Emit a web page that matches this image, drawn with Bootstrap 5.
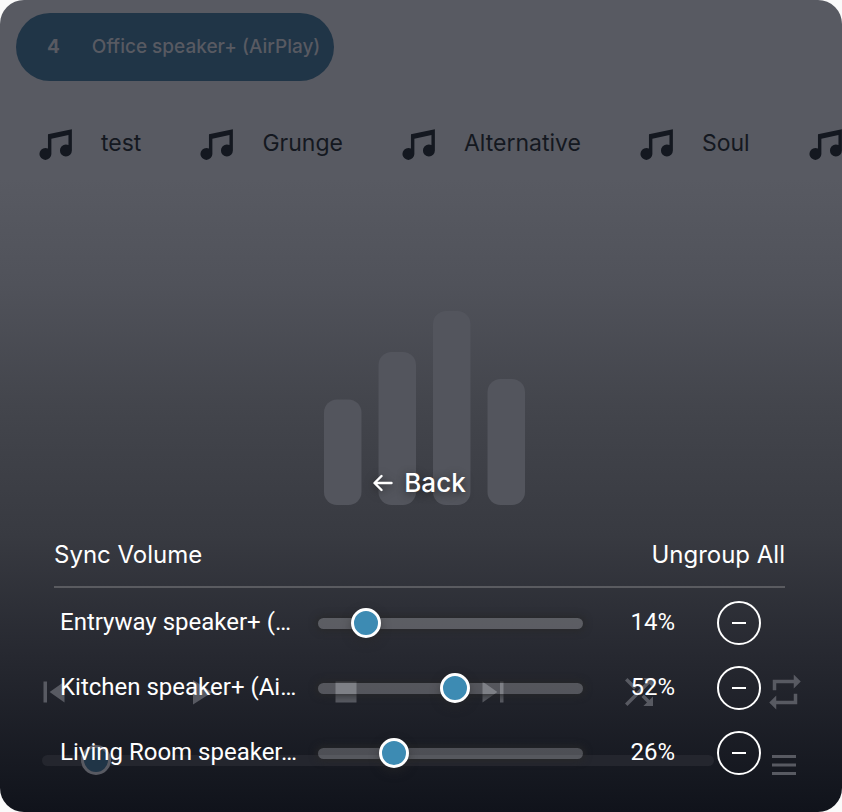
<!DOCTYPE html>
<html lang="en">
<head>
<meta charset="utf-8">
<meta name="viewport" content="width=device-width, initial-scale=1">
<title>Speaker group</title>
<link href="https://cdn.jsdelivr.net/npm/bootstrap@5.3.0/dist/css/bootstrap.min.css" rel="stylesheet">
<style>
  body { background: #fafafa; font-family: Inter, "Liberation Sans", sans-serif; }
  .player {
    min-height: 100vh;
    border-radius: 24px;
    background: linear-gradient(180deg, #585a62 0%, #585a62 22%, #50525a 35%, #43454c 50%, #383a41 66%, #262830 81%, #10131b 100%);
  }
  .dimmed { color: #585a62; padding: 13px 0 37px; }
  .speaker-chip {
    height: 68px; margin-left: 16px; padding: 0 14px 0 31px; gap: 32px;
    font-size: 19px; font-weight: 500;
  }
  .speaker-chip:disabled { opacity: 1; background: #203547; color: #585a62; }
  .media-list { padding: 0 0 0 36px; margin-top: 43px; gap: 56px; }
  .media-btn { gap: 24px; color: #141820; font-size: 23px; line-height: 42px; white-space: nowrap; flex: none; }
  .media-btn svg { width: 41px; height: 41px; }
  .media-btn span { line-height: 32px; padding-bottom: 4px; }
  .art { padding: 0 0 166px 6px; }
  .transport { padding: 0 36px 0 33px; }
  .transport svg { width: 42px; height: 42px; display: block; }
  .timeline { padding: 32px 46px 0 42px; gap: 58px; }
  .timeline svg { width: 24px; height: 20px; display: block; margin-top: 9px; }
  .sheet { color: #fff; padding: 0 57px 37px 54px; }
  .back-btn { font-size: 26px; font-weight: 500; line-height: 32px; gap: 11px; text-shadow: 0 2px 8px rgba(30, 30, 30, .8); }
  .back-btn svg { filter: drop-shadow(0 2px 5px rgba(30, 30, 30, .8)); }
  .sheet-head { margin-top: 40px; padding-bottom: 15px; border-bottom: 2px solid #5a5b60; font-size: 24px; line-height: 32px; }
  .speaker-rows { font-family: Roboto, "Liberation Sans", sans-serif; font-size: 24px; line-height: 32px; padding: 13px 24px 0 6px; gap: 21px; }
  .speaker-row { display: grid; grid-template-columns: 240fr 283fr 92px 86px; align-items: center; }
  .speaker-row > label, .speaker-row > output { padding-bottom: 2px; }
  .speaker-row > .level { margin-left: 18px; }
  .remove-btn { width: 44px; height: 44px; border: 2px solid #fff; }
  .level, .seek { -webkit-appearance: none; appearance: none; background: transparent; height: 30px; margin: 0; min-width: 0; display: block; }
  .level::-webkit-slider-runnable-track { height: 11px; border-radius: 6px; background: rgba(255, 255, 255, .23); box-shadow: 0 0 7px 2px rgba(40, 40, 40, .8); }
  .seek::-webkit-slider-runnable-track { height: 11px; border-radius: 6px; background: #24262e; }
  .level::-webkit-slider-thumb, .seek::-webkit-slider-thumb {
    -webkit-appearance: none; width: 30px; height: 30px; margin-top: -10px; border-radius: 50%;
    border: 3px solid #fff; background: #3d8bb3; box-shadow: 0 4px 10px rgba(40, 40, 40, .5);
  }
  .seek::-webkit-slider-thumb { border-color: #585a62; background: #203547; box-shadow: none; }
</style>
</head>
<body>
<svg class="d-none" aria-hidden="true">
  <symbol id="note" viewBox="0 0 24 24"><path fill="currentColor" d="M21,3V15.5A3.5,3.5 0 0,1 17.5,19A3.5,3.5 0 0,1 14,15.5A3.5,3.5 0 0,1 17.5,12C18.04,12 18.55,12.12 19,12.34V6.47L9,8.6V17.5A3.5,3.5 0 0,1 5.5,21A3.5,3.5 0 0,1 2,17.5A3.5,3.5 0 0,1 5.5,14C6.04,14 6.55,14.12 7,14.34V6L21,3Z"/></symbol>
</svg>
<main class="player position-relative overflow-hidden d-flex flex-column">
  <div class="dimmed d-flex flex-column flex-grow-1">
    <div class="d-flex">
      <button class="speaker-chip btn rounded-pill border-0 d-flex align-items-center" type="button" disabled><strong>4</strong><span>Office speaker+ (AirPlay)</span></button>
    </div>
    <nav class="media-list d-flex overflow-hidden" aria-label="Favorites">
      <button class="media-btn btn p-0 border-0 d-flex align-items-center" type="button"><svg aria-hidden="true"><use href="#note"/></svg><span>test</span></button>
      <button class="media-btn btn p-0 border-0 d-flex align-items-center" type="button"><svg aria-hidden="true"><use href="#note"/></svg><span>Grunge</span></button>
      <button class="media-btn btn p-0 border-0 d-flex align-items-center" type="button"><svg aria-hidden="true"><use href="#note"/></svg><span>Alternative</span></button>
      <button class="media-btn btn p-0 border-0 d-flex align-items-center" type="button"><svg aria-hidden="true"><use href="#note"/></svg><span>Soul</span></button>
      <button class="media-btn btn p-0 border-0 d-flex align-items-center" type="button" aria-label="More"><svg aria-hidden="true"><use href="#note"/></svg></button>
    </nav>
    <div class="art flex-grow-1 d-flex justify-content-center align-items-end">
      <svg width="201" height="194" viewBox="0 0 201 194" fill="#53555d" aria-hidden="true">
        <rect x="0" y="88.500" width="37.500" height="105.500" rx="13"/>
        <rect x="54.500" y="41" width="37.500" height="153" rx="13"/>
        <rect x="109" y="0" width="37.500" height="194" rx="13"/>
        <rect x="163.500" y="68" width="37.500" height="126" rx="13"/>
      </svg>
    </div>
    <div class="transport d-flex justify-content-between">
      <button class="btn p-0 border-0 text-reset" type="button" aria-label="Previous"><svg viewBox="0 0 24 24" fill="currentColor"><path d="M6,18V6H8V18H6M9.500,12L18,6V18L9.500,12Z"/></svg></button>
      <button class="btn p-0 border-0 text-reset" type="button" aria-label="Play"><svg viewBox="0 0 24 24" fill="currentColor"><path d="M8,5.140V19.140L19,12.140L8,5.140Z"/></svg></button>
      <button class="btn p-0 border-0 text-reset" type="button" aria-label="Stop"><svg viewBox="0 0 24 24" fill="currentColor"><path d="M18,18H6V6H18V18Z"/></svg></button>
      <button class="btn p-0 border-0 text-reset" type="button" aria-label="Next"><svg viewBox="0 0 24 24" fill="currentColor"><path d="M16,18H18V6H16M6,18L14.500,12L6,6V18Z"/></svg></button>
      <button class="btn p-0 border-0 text-reset" type="button" aria-label="Shuffle"><svg viewBox="0 0 24 24" fill="currentColor"><path d="M14.830,13.410L13.420,14.820L16.550,17.950L14.500,20H20V14.500L17.960,16.540L14.830,13.410M14.500,4L16.540,6.040L4,18.590L5.410,20L17.960,7.460L20,9.500V4M10.590,9.170L5.410,4L4,5.410L9.170,10.580L10.590,9.170Z"/></svg></button>
      <button class="btn p-0 border-0 text-reset" type="button" aria-label="Repeat"><svg viewBox="0 0 24 24" fill="currentColor"><path d="M17,17H7V14L3,18L7,22V19H19V13H17M7,7H17V10L21,6L17,2V5H5V11H7V7Z"/></svg></button>
    </div>
    <div class="timeline d-flex align-items-center">
      <input class="seek flex-grow-1" type="range" min="0" max="100" value="6" aria-label="Position">
      <button class="btn p-0 border-0 text-reset" type="button" aria-label="Menu"><svg viewBox="0 0 24 20" fill="currentColor"><path d="M0 0H24V3H0ZM0 8.500H24V11.500H0ZM0 17H24V20H0Z"/></svg></button>
    </div>
  </div>

  <section class="sheet position-absolute bottom-0 start-0 w-100" aria-label="Group volume">
    <div class="d-flex justify-content-center">
      <button class="back-btn btn p-0 border-0 text-white d-flex align-items-center" type="button"><svg width="20" height="18" viewBox="0 0 20 18" fill="none" stroke="currentColor" stroke-width="2.400" stroke-linecap="round" stroke-linejoin="round" aria-hidden="true"><path d="M18.500 9H2M8.500 2L1.500 9L8.500 16"/></svg>Back</button>
    </div>
    <div class="sheet-head d-flex justify-content-between">
      <span>Sync Volume</span>
      <a class="text-white text-decoration-none" href="#">Ungroup All</a>
    </div>
    <div class="speaker-rows d-flex flex-column">
      <div class="speaker-row">
        <label class="text-truncate" for="vol1">Entryway speaker+ (…</label>
        <input class="level" id="vol1" type="range" value="14">
        <output class="text-end" for="vol1">14%</output>
        <button class="remove-btn btn rounded-circle p-0 ms-auto d-flex align-items-center justify-content-center text-white" type="button" aria-label="Remove Entryway speaker+"><svg width="14" height="2" viewBox="0 0 14 2"><path fill="currentColor" d="M0 0H14V2H0Z"/></svg></button>
      </div>
      <div class="speaker-row">
        <label class="text-truncate" for="vol2">Kitchen speaker+ (Ai…</label>
        <input class="level" id="vol2" type="range" value="52">
        <output class="text-end" for="vol2">52%</output>
        <button class="remove-btn btn rounded-circle p-0 ms-auto d-flex align-items-center justify-content-center text-white" type="button" aria-label="Remove Kitchen speaker+"><svg width="14" height="2" viewBox="0 0 14 2"><path fill="currentColor" d="M0 0H14V2H0Z"/></svg></button>
      </div>
      <div class="speaker-row">
        <label class="text-truncate" for="vol3">Living Room speaker…</label>
        <input class="level" id="vol3" type="range" value="26">
        <output class="text-end" for="vol3">26%</output>
        <button class="remove-btn btn rounded-circle p-0 ms-auto d-flex align-items-center justify-content-center text-white" type="button" aria-label="Remove Living Room speaker+"><svg width="14" height="2" viewBox="0 0 14 2"><path fill="currentColor" d="M0 0H14V2H0Z"/></svg></button>
      </div>
    </div>
  </section>
</main>
<script src="https://cdn.jsdelivr.net/npm/bootstrap@5.3.0/dist/js/bootstrap.bundle.min.js"></script>
</body>
</html>
